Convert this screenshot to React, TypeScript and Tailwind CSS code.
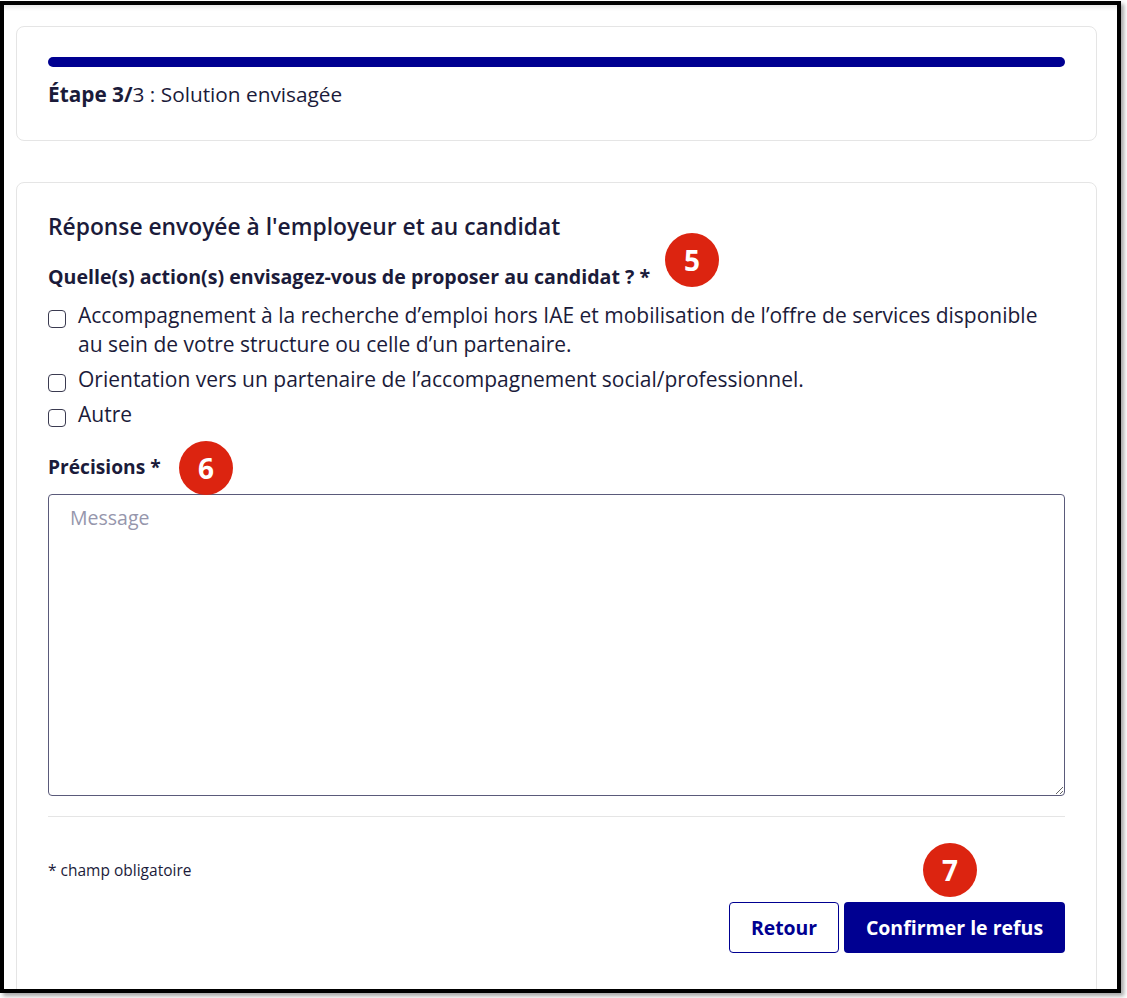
import React from "react";

const font = { fontFamily: "'Open Sans', 'Noto Sans', sans-serif" };

function Badge({ n }: { n: number }) {
  return (
    <span className="flex h-[54px] w-[54px] items-center justify-center rounded-full bg-[#dc2410] text-[28px] font-bold text-white">
      {n}
    </span>
  );
}

function Check({ children }: { children: React.ReactNode }) {
  return (
    <label className="flex items-start gap-[12px]">
      <span className="mt-[9px] h-[18px] w-[18px] shrink-0 rounded-[4px] border-[1.5px] border-[#3a3a50] bg-white" />
      <span>{children}</span>
    </label>
  );
}

export default function App() {
  return (
    <div className="h-[998px] w-[1127px] bg-white text-[#1b1b3a]" style={font}>
      <div className="mt-[1px] h-[992px] w-[1121px] overflow-hidden border-4 border-black bg-white shadow-[3px_3px_4px_rgba(0,0,0,0.35)]">
        <div className="h-full bg-gradient-to-b from-[#e8e8e8] to-white to-[6px] pl-[12px] pt-[21px]">
          {/* step card */}
          <div className="w-[1081px] rounded-[8px] border border-[#e5e5e5] bg-white px-[31px] pt-[30px] pb-[31px]">
            <div className="h-[10px] w-full rounded-full bg-[#000091]" />
            <p className="mt-[12px] text-[20.8px] leading-[30px]">
              <span className="font-bold">Étape 3/</span>3 : Solution envisagée
            </p>
          </div>

          {/* form card */}
          <div className="mt-[41px] h-[900px] w-[1081px] rounded-[8px] border border-[#e5e5e5] bg-white px-[31px] pt-[28px]">
            <h2 className="text-[22.8px] font-semibold leading-[32px]">
              Réponse envoyée à l'employeur et au candidat
            </h2>

            <div className="relative mt-[21px]">
              <p className="text-[19.6px] font-bold leading-[26px]">
                Quelle(s) action(s) envisagez-vous de proposer au candidat ? *
              </p>
              <span className="absolute left-[617px] top-[-31px]">
                <Badge n={5} />
              </span>
            </div>

            <div className="mt-[11px] flex flex-col gap-[6px] text-[21px] leading-[29px]">
              <Check>
                Accompagnement à la recherche d’emploi hors IAE et mobilisation de l’offre de services disponible
                <br />
                au sein de votre structure ou celle d’un partenaire.
              </Check>
              <Check>Orientation vers un partenaire de l’accompagnement social/professionnel.</Check>
              <Check>Autre</Check>
            </div>

            <div className="relative mt-[25px]">
              <p className="text-[19.2px] font-bold leading-[26px]">Précisions *</p>
              <span className="absolute left-[131px] top-[-13px]">
                <Badge n={6} />
              </span>
            </div>

            <textarea
              placeholder="Message"
              className="mt-[14px] block h-[302px] w-full resize-y rounded-[4px] border border-[#5a5a7a] px-[21px] py-[9px] text-[19.5px] leading-[28px] placeholder:text-[#9696ac]"
            />

            <div className="mt-[20px] h-px w-full bg-[#e5e5e5]" />

            <p className="mt-[43px] text-[15.5px] leading-[20px]">* champ obligatoire</p>

            <div className="relative mt-[22px] flex justify-end gap-[5px]">
              <span className="absolute right-[88px] top-[-59px]">
                <Badge n={7} />
              </span>
              <button className="h-[51px] w-[110px] rounded-[4px] border border-[#000091] bg-white text-[19.4px] font-bold text-[#000091]">
                Retour
              </button>
              <button className="h-[51px] w-[221px] rounded-[4px] bg-[#000091] text-[19.5px] font-bold text-white">
                Confirmer le refus
              </button>
            </div>
          </div>
        </div>
      </div>
    </div>
  );
}
